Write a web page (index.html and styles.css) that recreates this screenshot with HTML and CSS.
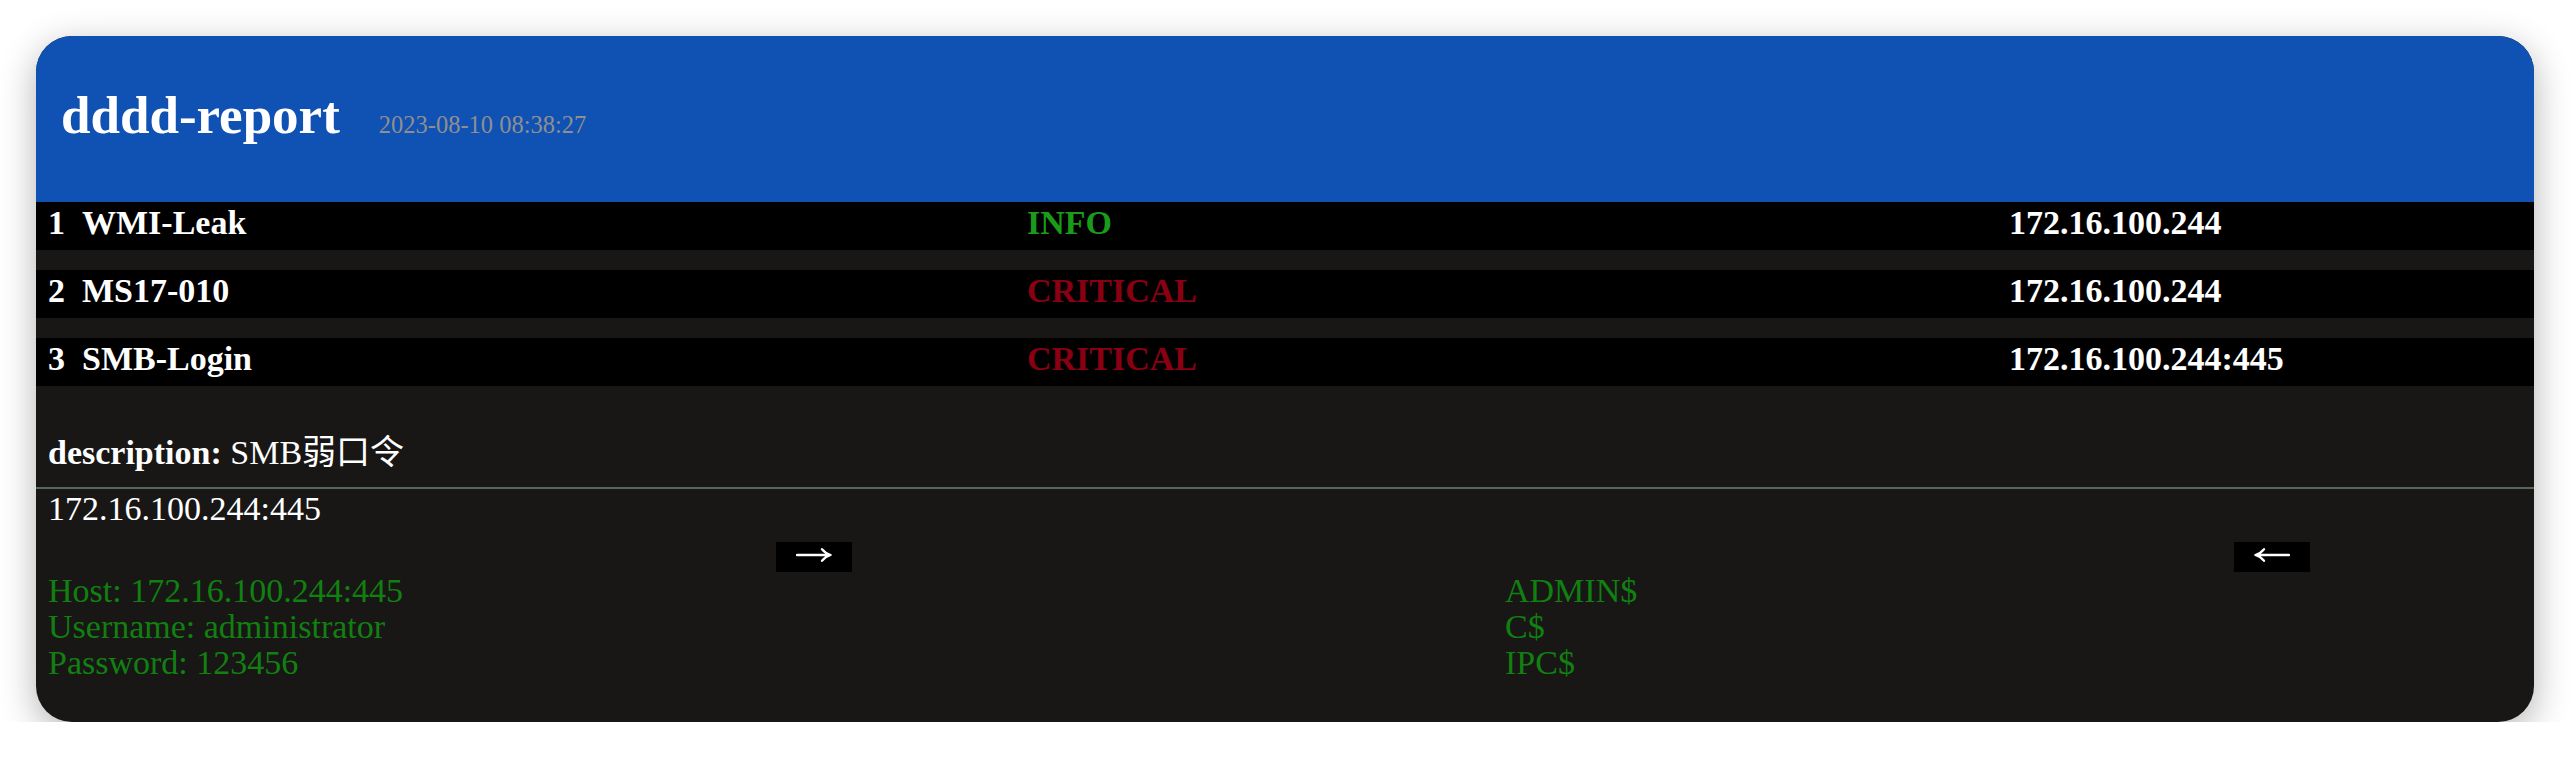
FILE: index.html
```html
<!DOCTYPE html>
<html lang="zh">
<head>
<meta charset="utf-8">
<title>dddd-report</title>
<link rel="stylesheet" href="styles.css">
</head>
<body>
<div class="window">
  <header class="head">
    <h1 class="title">dddd-report</h1>
    <span class="time">2023-08-10 08:38:27</span>
  </header>
  <div class="list">
    <div class="row">
      <div class="name"><span class="num">1</span><span>WMI-Leak</span></div>
      <div class="sev info">INFO</div>
      <div class="target">172.16.100.244</div>
    </div>
    <div class="row">
      <div class="name"><span class="num">2</span><span>MS17-010</span></div>
      <div class="sev critical">CRITICAL</div>
      <div class="target">172.16.100.244</div>
    </div>
    <div class="row">
      <div class="name"><span class="num">3</span><span>SMB-Login</span></div>
      <div class="sev critical">CRITICAL</div>
      <div class="target">172.16.100.244:445</div>
    </div>
  </div>
  <section class="detail">
    <p class="desc"><b>description:</b> SMB弱口令</p>
    <hr class="rule">
    <div class="addr">172.16.100.244:445</div>
    <div class="slides">
      <div class="slide first">
        <button class="nav" type="button" aria-label="→">
          <svg class="arrow" width="36" height="16" viewBox="0 0 36 16"><path d="M1 8H34M26 2.2Q29.5 6.5 34.6 8Q29.5 9.5 26 13.8" fill="none" stroke="#fff" stroke-width="2.3" stroke-linecap="round" stroke-linejoin="round"/></svg>
        </button>
        <div class="out">Host: 172.16.100.244:445<br>Username: administrator<br>Password: 123456</div>
      </div>
      <div class="slide second">
        <button class="nav" type="button" aria-label="←">
          <svg class="arrow" width="36" height="16" viewBox="0 0 36 16"><path d="M35 8H2M10 2.2Q6.5 6.5 1.4 8Q6.5 9.5 10 13.8" fill="none" stroke="#fff" stroke-width="2.3" stroke-linecap="round" stroke-linejoin="round"/></svg>
        </button>
        <div class="out">ADMIN$<br>C$<br>IPC$</div>
      </div>
    </div>
  </section>
</div>
</body>
</html>
```
FILE: styles.css
```css
html, body {
  margin: 0;
  padding: 0;
  background: #ffffff;
}

body {
  font-family: "Liberation Serif", "Noto Sans CJK SC", serif;
  color: #ffffff;
}

.window {
  margin: 36px 36px 0;
  background: #181716;
  border-radius: 36px;
  overflow: hidden;
  box-shadow: 0 10px 36px rgba(0, 0, 0, 0.3);
  padding-bottom: 41px;
}

.head {
  background: #1051b4;
  height: 166px;
  box-sizing: border-box;
  padding: 49px 0 0 25px;
  display: flex;
  align-items: baseline;
}

.title {
  margin: 0;
  font-size: 53px;
  font-weight: bold;
  color: #ffffff;
}

.time {
  margin-left: 39px;
  font-size: 24.5px;
  color: #8f8f8f;
}

.list {
  display: flex;
  flex-direction: column;
  gap: 20px;
}

.row {
  display: grid;
  grid-template-columns: 979px 982px 1fr;
  height: 48px;
  box-sizing: border-box;
  padding: 2px 12px 0;
  background: #000000;
  font-size: 34px;
  font-weight: bold;
}

.name {
  display: flex;
  gap: 17px;
}

.info {
  color: #1a9c1a;
}

.critical {
  color: #8a0012;
}

.detail {
  padding: 0 12px;
  font-size: 34px;
}

.desc {
  margin: 47px 0 0;
  height: 39px;
  line-height: 39px;
}

.rule {
  margin: 15px -12px 0;
  border: 0;
  height: 2px;
  background: #56665d;
}

.addr {
  margin-top: 1px;
}

.slides {
  display: grid;
  grid-template-columns: 1457px 1fr;
  margin-top: 14px;
}

.nav {
  display: block;
  width: 76px;
  height: 30px;
  box-sizing: border-box;
  padding: 0;
  border: 0;
  background: #000000;
}

.arrow {
  display: block;
  margin: -4px auto 0;
}

.first .nav {
  margin-left: 728px;
}

.second .nav {
  margin-left: 729px;
}

.out {
  margin-top: 1px;
  color: #118011;
  line-height: 36px;
}
```
